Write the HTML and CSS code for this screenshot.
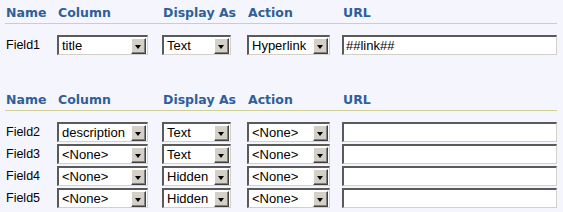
FILE: index.html
```html
<!DOCTYPE html>
<html>
<head>
<meta charset="utf-8">
<link rel="stylesheet" href="styles.css">
</head>
<body>
<div class="page">
  <div class="section">
    <div class="grid head head-a">
      <div>Name</div><div>Column</div><div>Display As</div><div>Action</div><div>URL</div>
    </div>
    <div class="rows">
      <div class="grid row">
        <div class="label">Field1</div>
        <div class="sel w-col"><span class="val">title</span><span class="btn"></span></div>
        <div class="sel w-disp"><span class="val">Text</span><span class="btn"></span></div>
        <div class="sel w-act"><span class="val">Hyperlink</span><span class="btn"></span></div>
        <div class="inp">##link##</div>
      </div>
    </div>
  </div>
  <div class="section second">
    <div class="grid head head-b">
      <div>Name</div><div>Column</div><div>Display As</div><div>Action</div><div>URL</div>
    </div>
    <div class="rows">
      <div class="grid row">
        <div class="label">Field2</div>
        <div class="sel w-col"><span class="val">description</span><span class="btn"></span></div>
        <div class="sel w-disp"><span class="val">Text</span><span class="btn"></span></div>
        <div class="sel w-act"><span class="val">&lt;None&gt;</span><span class="btn"></span></div>
        <div class="inp"></div>
      </div>
      <div class="grid row">
        <div class="label">Field3</div>
        <div class="sel w-col"><span class="val">&lt;None&gt;</span><span class="btn"></span></div>
        <div class="sel w-disp"><span class="val">Text</span><span class="btn"></span></div>
        <div class="sel w-act"><span class="val">&lt;None&gt;</span><span class="btn"></span></div>
        <div class="inp"></div>
      </div>
      <div class="grid row">
        <div class="label">Field4</div>
        <div class="sel w-col"><span class="val">&lt;None&gt;</span><span class="btn"></span></div>
        <div class="sel w-disp"><span class="val">Hidden</span><span class="btn"></span></div>
        <div class="sel w-act"><span class="val">&lt;None&gt;</span><span class="btn"></span></div>
        <div class="inp"></div>
      </div>
      <div class="grid row">
        <div class="label">Field5</div>
        <div class="sel w-col"><span class="val">&lt;None&gt;</span><span class="btn"></span></div>
        <div class="sel w-disp"><span class="val">Hidden</span><span class="btn"></span></div>
        <div class="sel w-act"><span class="val">&lt;None&gt;</span><span class="btn"></span></div>
        <div class="inp"></div>
      </div>
    </div>
  </div>
</div>
</body>
</html>
```
FILE: styles.css
```css
html, body {
  margin: 0;
  padding: 0;
  background: #f5f6fd;
}
body {
  font-family: "Liberation Sans", Arial, sans-serif;
  font-size: 12.5px;
  color: #000;
}
.page {
  padding: 5px 6px 0 5px;
  width: 552px;
}
.grid {
  display: grid;
  grid-template-columns: 52px 105px 85px 95px 215px;
  align-items: center;
}
.head {
  font-family: "DejaVu Sans", Verdana, sans-serif;
  font-weight: bold;
  font-size: 12.5px;
  color: #2f5f9a;
  box-sizing: border-box;
  height: 19px;
  padding-bottom: 3px;
  line-height: 15px;
  align-items: end;
  border-bottom: 1px solid #d5ceae;
}
.head > div {
  padding-left: 1px;
}
.head-b {
  border-bottom-color: #cfcf98;
}
.rows {
  display: flex;
  flex-direction: column;
  gap: 2px;
  padding-top: 11px;
}
.second {
  padding-top: 37px;
}
.row {
  height: 20px;
}
.label {
  padding-left: 1px;
}
.sel {
  box-sizing: border-box;
  height: 20px;
  display: flex;
  align-items: center;
  background: #fff;
  border-style: solid;
  border-width: 2px 1px 1px 2px;
  border-color: #5a5a5a #d4d0c8 #d4d0c8 #5a5a5a;
  padding-right: 1px;
  font-size: 13px;
}
.w-col { width: 91px; }
.w-disp { width: 69px; }
.w-act { width: 83px; }
.val {
  flex: 1;
  padding-left: 3px;
  white-space: nowrap;
  overflow: hidden;
}
.btn {
  position: relative;
  box-sizing: border-box;
  width: 15px;
  height: 16px;
  background: #d4d0c8;
  border-style: solid;
  border-width: 1px;
  border-color: #fff #404040 #404040 #fff;
  box-shadow: inset -1px -1px 0 #808080;
}
.btn::after {
  content: "";
  position: absolute;
  left: 3px;
  top: 6px;
  border-left: 3.5px solid transparent;
  border-right: 3.5px solid transparent;
  border-top: 4px solid #000;
}
.inp {
  box-sizing: border-box;
  width: 215px;
  height: 20px;
  background: #fff;
  border-style: solid;
  border-width: 2px 1px 1px 2px;
  border-color: #5a5a5a #d4d0c8 #d4d0c8 #5a5a5a;
  padding-left: 2px;
  line-height: 17px;
  white-space: nowrap;
  font-size: 13px;
}
```
